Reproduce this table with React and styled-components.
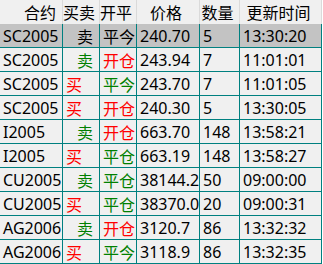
import React from "react";
import styled, { createGlobalStyle } from "styled-components";

const Global = createGlobalStyle`
  html, body { margin: 0; padding: 0; background: #ffffff; }
  body { font-family: "Noto Sans", "Noto Sans CJK SC", sans-serif; }
`;

const COLS = "63px 37px 37px 63px 40px 82px";

const Table = styled.div`
  width: 322px;
  background: #f0f0f0;
  color: #000;
`;

const HeaderRow = styled.div`
  display: grid;
  grid-template-columns: ${COLS};
  height: 24px;
  background: #f0f0f0;
`;

const HeadCell = styled.div`
  display: flex;
  align-items: center;
  justify-content: ${(p) => (p.$align === "right" ? "flex-end" : "center")};
  padding: 0 6px 0 2px;
  border-right: 1px solid #dadada;
  font-family: "Noto Sans CJK SC", sans-serif;
  font-size: 16px;
  white-space: nowrap;
  overflow: hidden;
`;

const Row = styled.div`
  display: grid;
  grid-template-columns: ${COLS};
  height: 24px;
  box-sizing: border-box;
  border-bottom: 1px solid #008080;
  background: ${(p) => (p.$selected ? "#c3c3c3" : "#f0f0f0")};
`;

const Cell = styled.div`
  display: flex;
  align-items: center;
  justify-content: ${(p) => (p.$right ? "flex-end" : "flex-start")};
  padding: 0 ${(p) => (p.$right ? "6px" : "2px")} 0 3px;
  border-right: 1px solid #008080;
  white-space: nowrap;
  overflow: hidden;
  color: ${(p) => p.$color || "#000"};
  font-size: 16px;
  font-family: ${(p) =>
    p.$cjk ? `"Noto Sans CJK SC", sans-serif` : `"Noto Sans", sans-serif`};
`;

const RED = "#ff0000";
const GREEN = "#008000";

const rows = [
  ["SC2005", "卖", "平今", "240.70", "5", "13:30:20", true],
  ["SC2005", "卖", "开仓", "243.94", "7", "11:01:01"],
  ["SC2005", "买", "平今", "243.70", "7", "11:01:05"],
  ["SC2005", "买", "开仓", "240.30", "5", "13:30:05"],
  ["I2005", "卖", "开仓", "663.70", "148", "13:58:21"],
  ["I2005", "买", "平仓", "663.19", "148", "13:58:27"],
  ["CU2005", "卖", "平仓", "38144.2", "50", "09:00:00"],
  ["CU2005", "买", "平仓", "38370.0", "20", "09:00:31"],
  ["AG2006", "卖", "开仓", "3120.7", "86", "13:32:32"],
  ["AG2006", "买", "平今", "3118.9", "86", "13:32:35"],
];

export default function App() {
  return (
    <>
      <Global />
      <Table>
        <HeaderRow>
          <HeadCell $align="right">合约</HeadCell>
          <HeadCell>买卖</HeadCell>
          <HeadCell>开平</HeadCell>
          <HeadCell>价格</HeadCell>
          <HeadCell>数量</HeadCell>
          <HeadCell>更新时间</HeadCell>
        </HeaderRow>
        {rows.map(([c, d, o, p, q, t, sel], i) => {
          const sell = d === "卖";
          return (
            <Row key={i} $selected={sel}>
              <Cell>{c}</Cell>
              <Cell $cjk $right={sell} $color={sel ? "#000" : sell ? GREEN : RED}>
                {d}
              </Cell>
              <Cell $cjk $color={sel ? "#000" : o === "开仓" ? RED : GREEN}>{o}</Cell>
              <Cell>{p}</Cell>
              <Cell>{q}</Cell>
              <Cell>{t}</Cell>
            </Row>
          );
        })}
      </Table>
    </>
  );
}
